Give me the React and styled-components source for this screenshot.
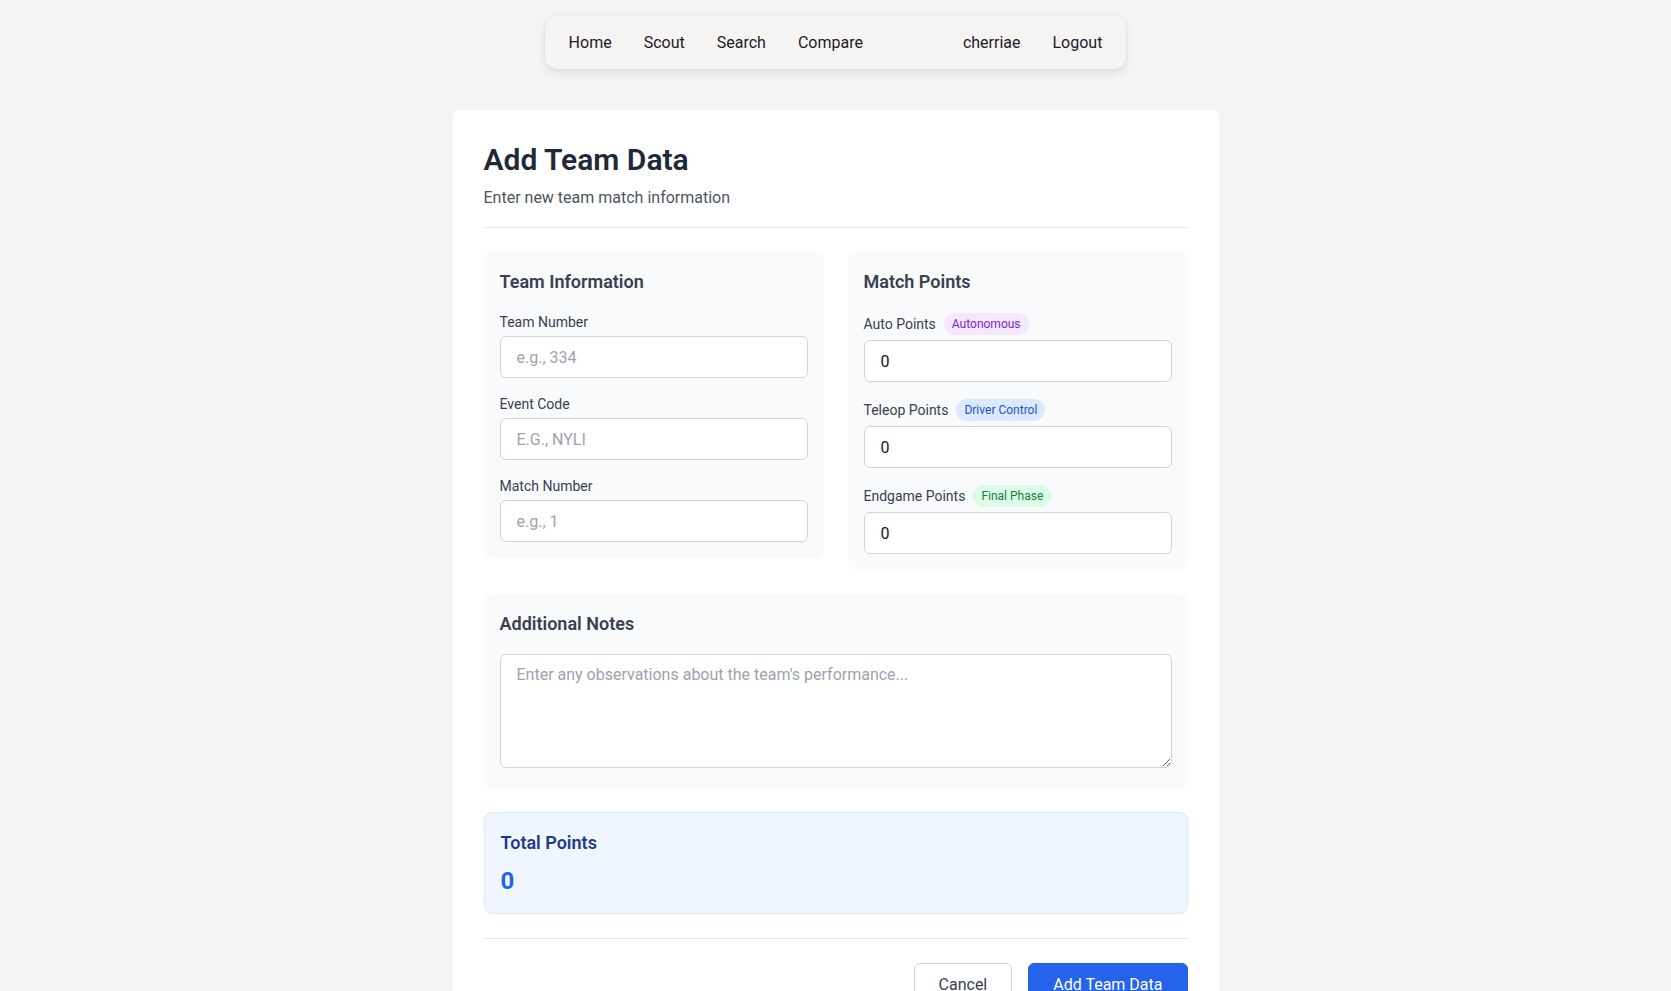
import React from "react";
import styled, { createGlobalStyle } from "styled-components";

const Global = createGlobalStyle`
  * { box-sizing: border-box; }
  html, body { margin: 0; padding: 0; }
  body {
    background: #f3f4f6;
    font-family: Roboto, "Noto Sans", Arial, sans-serif;
    color: #1f2937;
  }
  input, textarea, button { font-family: inherit; }
`;

const Page = styled.div`
  min-height: 100vh;
  padding-top: 15px;
  display: flex;
  flex-direction: column;
  align-items: center;
`;

const Nav = styled.nav`
  display: flex;
  align-items: center;
  height: 54px;
  padding: 0 8px;
  background: #f5f4f2;
  border-radius: 12px;
  box-shadow: 0 4px 10px rgba(0, 0, 0, 0.08), 0 1px 3px rgba(0, 0, 0, 0.06);
`;

const NavGroup = styled.div`
  display: flex;
  align-items: center;
  margin-left: ${(p) => (p.$right ? "68px" : "0")};
`;

const NavLink = styled.a`
  padding: 0 16px;
  font-size: 16px;
  color: #1c1a2b;
  text-decoration: none;
  cursor: pointer;
`;

const Card = styled.main`
  width: 768px;
  margin-top: 41px;
  background: #ffffff;
  border-radius: 8px;
  box-shadow: 0 1px 3px rgba(0, 0, 0, 0.06);
  padding: 32px 32px 0;
`;

const Header = styled.header`
  padding-bottom: 17px;
  border-bottom: 1px solid #e5e7eb;
  margin-bottom: 24px;
`;

const Title = styled.h1`
  margin: 0;
  font-size: 30px;
  line-height: 36px;
  font-weight: 600;
  color: #1f2937;
`;

const Subtitle = styled.p`
  margin: 8px 0 0;
  font-size: 16px;
  line-height: 24px;
  color: #4b5563;
`;

const Grid = styled.div`
  display: grid;
  grid-template-columns: 1fr 1fr;
  gap: 24px;
  align-items: start;
  margin-bottom: 24px;
`;

const Section = styled.section`
  background: #f9fafb;
  border-radius: 8px;
  padding: 16px;
  margin-bottom: ${(p) => (p.$flush ? "0" : "24px")};
`;

const SectionTitle = styled.h2`
  margin: 0 0 16px;
  font-size: 18px;
  line-height: 28px;
  font-weight: 600;
  color: #374151;
`;

const Fields = styled.div`
  display: flex;
  flex-direction: column;
  gap: 16px;
`;

const Field = styled.div`
  display: flex;
  flex-direction: column;
`;

const LabelRow = styled.div`
  display: flex;
  align-items: center;
  gap: 8px;
  height: ${(p) => (p.$badge ? "24px" : "20px")};
  margin-bottom: 4px;
`;

const Label = styled.label`
  font-size: 14px;
  line-height: 20px;
  color: #374151;
`;

const Badge = styled.span`
  display: inline-flex;
  align-items: center;
  height: 22px;
  padding: 0 8px;
  border-radius: 999px;
  font-size: 12px;
  background: ${(p) => p.$bg};
  color: ${(p) => p.$fg};
`;

const Input = styled.input`
  width: 100%;
  height: 42px;
  padding: 8px 16px;
  border: 1px solid #d1d5db;
  border-radius: 6px;
  background: #fff;
  font-size: 16px;
  color: #111827;
  outline: none;
  &::placeholder { color: #9ca3af; }
`;

const TextArea = styled.textarea`
  width: 100%;
  padding: 8px 16px;
  border: 1px solid #d1d5db;
  border-radius: 6px;
  background: #fff;
  font-size: 16px;
  line-height: 24px;
  color: #111827;
  outline: none;
  resize: vertical;
  &::placeholder { color: #9ca3af; }
`;

const TotalBox = styled.div`
  background: #eff6ff;
  border: 1px solid #dbeafe;
  border-radius: 8px;
  padding: 16px;
  margin-bottom: 24px;
`;

const TotalTitle = styled.h3`
  margin: 0 0 8px;
  font-size: 18px;
  line-height: 28px;
  font-weight: 600;
  color: #1e3a8a;
`;

const TotalValue = styled.div`
  font-size: 24px;
  line-height: 32px;
  font-weight: 700;
  color: #2563eb;
`;

const Actions = styled.div`
  display: flex;
  justify-content: flex-end;
  gap: 16px;
  border-top: 1px solid #e5e7eb;
  padding: 24px 0 32px;
`;

const Button = styled.button`
  height: 42px;
  padding: 0 24px;
  border-radius: 6px;
  font-size: 16px;
  cursor: pointer;
  border: 1px solid ${(p) => (p.$primary ? "#2563eb" : "#d1d5db")};
  background: ${(p) => (p.$primary ? "#2563eb" : "#ffffff")};
  color: ${(p) => (p.$primary ? "#ffffff" : "#374151")};
`;

const pointFields = [
  { label: "Auto Points", badge: "Autonomous", bg: "#f3e8ff", fg: "#7e22ce" },
  { label: "Teleop Points", badge: "Driver Control", bg: "#dbeafe", fg: "#1d4ed8" },
  { label: "Endgame Points", badge: "Final Phase", bg: "#dcfce7", fg: "#15803d" },
];

const teamFields = [
  { label: "Team Number", placeholder: "e.g., 334" },
  { label: "Event Code", placeholder: "E.G., NYLI" },
  { label: "Match Number", placeholder: "e.g., 1" },
];

export default function App() {
  return (
    <>
      <Global />
      <Page>
        <Nav>
          <NavGroup>
            <NavLink>Home</NavLink>
            <NavLink>Scout</NavLink>
            <NavLink>Search</NavLink>
            <NavLink>Compare</NavLink>
          </NavGroup>
          <NavGroup $right>
            <NavLink>cherriae</NavLink>
            <NavLink>Logout</NavLink>
          </NavGroup>
        </Nav>
        <Card>
          <Header>
            <Title>Add Team Data</Title>
            <Subtitle>Enter new team match information</Subtitle>
          </Header>
          <Grid>
            <Section $flush>
              <SectionTitle>Team Information</SectionTitle>
              <Fields>
                {teamFields.map((f) => (
                  <Field key={f.label}>
                    <LabelRow>
                      <Label>{f.label}</Label>
                    </LabelRow>
                    <Input placeholder={f.placeholder} />
                  </Field>
                ))}
              </Fields>
            </Section>
            <Section $flush>
              <SectionTitle>Match Points</SectionTitle>
              <Fields>
                {pointFields.map((f) => (
                  <Field key={f.label}>
                    <LabelRow $badge>
                      <Label>{f.label}</Label>
                      <Badge $bg={f.bg} $fg={f.fg}>{f.badge}</Badge>
                    </LabelRow>
                    <Input defaultValue="0" />
                  </Field>
                ))}
              </Fields>
            </Section>
          </Grid>
          <Section>
            <SectionTitle>Additional Notes</SectionTitle>
            <TextArea rows={4} placeholder="Enter any observations about the team's performance..." />
          </Section>
          <TotalBox>
            <TotalTitle>Total Points</TotalTitle>
            <TotalValue>0</TotalValue>
          </TotalBox>
          <Actions>
            <Button>Cancel</Button>
            <Button $primary>Add Team Data</Button>
          </Actions>
        </Card>
      </Page>
    </>
  );
}
